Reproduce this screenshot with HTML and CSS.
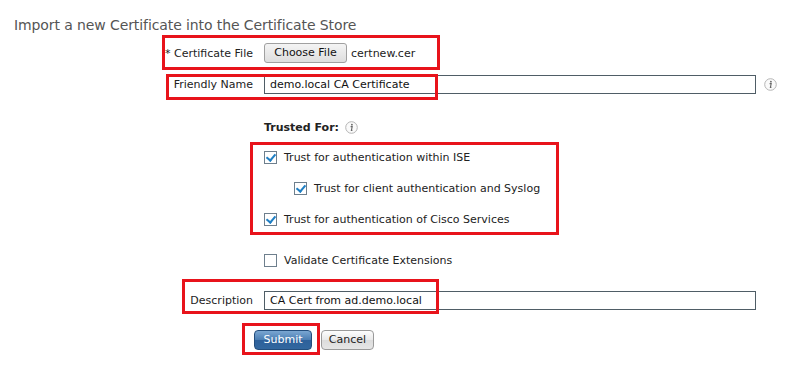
FILE: index.html
```html
<!DOCTYPE html>
<html lang="en">
<head>
    <meta charset="UTF-8">
    <title>Import Certificate</title>
    <link rel="stylesheet" href="styles.css">
</head>
<body>
    <div class="page">
        <h1 class="title">Import a new Certificate into the Certificate Store</h1>

        <form class="form">
            <div class="row row-file">
                <label class="label">* Certificate File</label>
                <div class="control">
                    <span class="file-btn">Choose File</span>
                    <span class="file-name">certnew.cer</span>
                </div>
            </div>

            <div class="row row-name">
                <label class="label">Friendly Name</label>
                <div class="control">
                    <input class="text-input" type="text" value="demo.local CA Certificate">
                </div>
                <span class="info">
                    <svg width="13" height="13" viewBox="0 0 13 13">
                        <circle cx="6.5" cy="6.5" r="5.8" fill="#fafafa" stroke="#b5b5b5"/>
                        <circle cx="6.9" cy="3.7" r="0.9" fill="#666"/>
                        <path d="M5.6 5.6 H7.2 L6.4 9.4 H7.4" fill="none" stroke="#666" stroke-width="1.1"/>
                    </svg>
                </span>
            </div>

            <div class="row row-trusted">
                <span></span>
                <div class="control">
                    <span class="trusted">Trusted For:</span>
                    <span class="info">
                        <svg width="13" height="13" viewBox="0 0 13 13">
                            <circle cx="6.5" cy="6.5" r="5.8" fill="#fafafa" stroke="#b5b5b5"/>
                            <circle cx="6.9" cy="3.7" r="0.9" fill="#666"/>
                            <path d="M5.6 5.6 H7.2 L6.4 9.4 H7.4" fill="none" stroke="#666" stroke-width="1.1"/>
                        </svg>
                    </span>
                </div>
            </div>

            <div class="row row-check first">
                <span></span>
                <div class="control">
                    <span class="check checked"></span>
                    <span>Trust for authentication within ISE</span>
                </div>
            </div>
            <div class="row row-check">
                <span></span>
                <div class="control sub">
                    <span class="check checked"></span>
                    <span>Trust for client authentication and Syslog</span>
                </div>
            </div>
            <div class="row row-check">
                <span></span>
                <div class="control">
                    <span class="check checked"></span>
                    <span>Trust for authentication of Cisco Services</span>
                </div>
            </div>

            <div class="row row-validate">
                <span></span>
                <div class="control">
                    <span class="check"></span>
                    <span>Validate Certificate Extensions</span>
                </div>
            </div>

            <div class="row row-desc">
                <label class="label">Description</label>
                <div class="control">
                    <input class="text-input" type="text" value="CA Cert from ad.demo.local">
                </div>
            </div>

            <div class="actions">
                <span class="btn btn-submit">Submit</span>
                <span class="btn btn-cancel">Cancel</span>
            </div>
        </form>

        <!-- red annotation frames -->
        <div class="mark mark-file"></div>
        <div class="mark mark-name"></div>
        <div class="mark mark-trust"></div>
        <div class="mark mark-desc"></div>
        <div class="mark mark-submit"></div>
    </div>
</body>
</html>
```

FILE: styles.css
```css
* {
    box-sizing: border-box;
    margin: 0;
    padding: 0;
}
body {
    font-family: 'DejaVu Sans', Verdana, sans-serif;
    font-size: 11px;
    color: #222;
    background-color: #fff;
}
.page {
    position: relative;
    width: 791px;
    height: 380px;
}
.title {
    font-size: 14px;
    font-weight: normal;
    color: #555;
    padding: 17px 0 0 14px;
    height: 43px;
    letter-spacing: -0.1px;
}
.row {
    display: grid;
    grid-template-columns: 264px 492px 30px;
    align-items: center;
}
.label {
    text-align: right;
    padding-right: 11px;
}
.control {
    display: flex;
    align-items: center;
    gap: 6px;
}
.row-file {
    height: 20px;
}
.row-name {
    height: 20px;
    margin-top: 11px;
}
.row-trusted {
    height: 16px;
    margin-top: 25px;
}
.row-check {
    height: 16px;
    margin-top: 15px;
}
.row-check.first {
    margin-top: 14px;
}
.row-validate {
    height: 16px;
    margin-top: 25px;
}
.row-desc {
    height: 20px;
    margin-top: 22px;
}
.sub {
    padding-left: 30px;
}
.file-btn {
    display: inline-block;
    width: 83px;
    height: 20px;
    line-height: 18px;
    text-align: center;
    border: 1px solid #a0a0a0;
    border-radius: 3px;
    background: linear-gradient(#f4f4f4, #dedede);
    color: #111;
}
.file-name {
    margin-left: -2px;
}
.text-input {
    width: 100%;
    height: 19px;
    border: 1px solid #4f5d66;
    padding: 0 5px;
    font: inherit;
    color: #111;
    outline: none;
}
.info {
    display: inline-flex;
    padding-left: 8px;
}
.trusted {
    font-weight: bold;
    font-size: 11px;
}
.row-trusted .info {
    padding-left: 0;
}
.check {
    width: 13px;
    height: 13px;
    border: 1px solid #6e7f8d;
    background: #fff;
    margin-right: 1px;
    position: relative;
}
.check.checked::after {
    content: "";
    position: absolute;
    left: 3px;
    top: 0;
    width: 4px;
    height: 7px;
    border: solid #1f7fc4;
    border-width: 0 2px 2px 0;
    transform: rotate(40deg);
}
.actions {
    display: flex;
    gap: 9px;
    margin: 20px 0 0 254px;
}
.btn {
    display: inline-block;
    height: 20px;
    line-height: 18px;
    text-align: center;
    border-radius: 4px;
}
.btn-submit {
    width: 58px;
    color: #fff;
    border: 1px solid #234d7c;
    background: linear-gradient(#7aa6d2, #4a7db2 50%, #2d609a 51%, #32679f);
}
.btn-cancel {
    width: 53px;
    color: #222;
    border: 1px solid #9a9a9a;
    background: linear-gradient(#fdfdfd, #e9e9e9 50%, #dcdcdc 51%, #e6e6e6);
}
.mark {
    position: absolute;
    border: 3px solid #e8131b;
}
.mark-file {
    left: 162px;
    top: 35px;
    width: 278px;
    height: 35px;
}
.mark-name {
    left: 166px;
    top: 74px;
    width: 272px;
    height: 26px;
}
.mark-trust {
    left: 250px;
    top: 142px;
    width: 309px;
    height: 93px;
}
.mark-desc {
    left: 182px;
    top: 279px;
    width: 257px;
    height: 35px;
}
.mark-submit {
    left: 242px;
    top: 323px;
    width: 78px;
    height: 32px;
}
```
